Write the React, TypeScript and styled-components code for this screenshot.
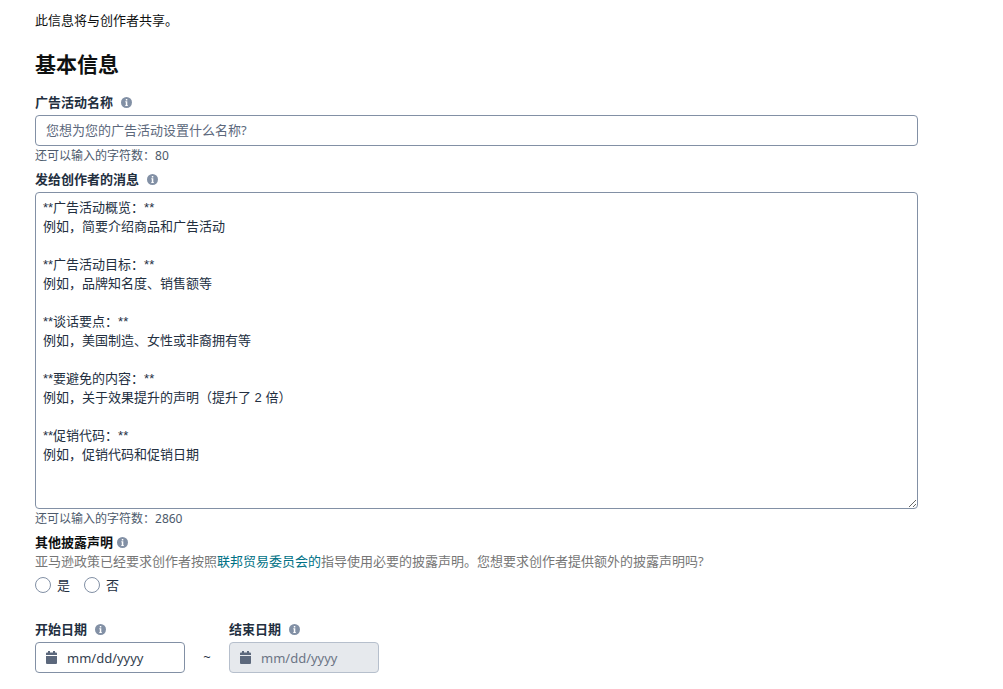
import React, { useId, useState } from 'react';
import styled, { createGlobalStyle } from 'styled-components';

const GlobalStyle = createGlobalStyle`
  *, *::before, *::after { box-sizing: border-box; }
  body {
    margin: 0;
    background: #fff;
    color: #232f3f;
    font: 13px/20px "Noto Sans", "Noto Sans CJK SC", sans-serif;
  }
  input, textarea, button { font: inherit; color: inherit; }
`;

const Page = styled.main`
  padding: 10px 85px 16px 35px;
`;

const Intro = styled.p`
  margin: 0;
  color: #0f1111;
`;

const Heading = styled.h2`
  margin: 19px 0 13px;
  color: #0f1111;
  font-size: 21px;
  line-height: 30px;
  font-weight: 700;
`;

const Field = styled.div`
  margin-bottom: 4px;
`;

const LabelRow = styled.div`
  display: flex;
  align-items: center;
  gap: 8px;
  margin-bottom: 3px;
`;

const Label = styled.label`
  font-weight: 700;
`;

const InfoButton = styled.button`
  display: flex;
  padding: 0;
  border: 0;
  background: none;
  color: #8290a5;
  cursor: pointer;
`;

const controlFrame = `
  border: 1px solid #8290a5;
  border-radius: 4px;
  background: #fff;
`;

const TextInput = styled.input`
  ${controlFrame}
  display: block;
  width: 100%;
  height: 31px;
  padding: 0 10px 2px;
  &::placeholder { color: #5c687c; opacity: 1; }
`;

const MessageBox = styled.textarea`
  ${controlFrame}
  display: block;
  width: 100%;
  padding: 5px 7px;
  height: 317px;
  font-family: "Liberation Sans", "Noto Sans CJK SC", sans-serif;
  line-height: 19px;
  resize: vertical;
`;

const Counter = styled.p`
  margin: 1px 0 0;
  color: #4d5a6c;
  font-size: 12px;
  line-height: 18px;
`;

const Disclosure = styled.fieldset`
  min-width: 0;
  margin: 0 0 24px;
  padding: 0;
  border: 0;
`;

const Legend = styled.legend`
  display: flex;
  align-items: center;
  gap: 4px;
  padding: 0;
  color: #0f1111;
  font-weight: 700;
`;

const Description = styled.p`
  margin: 0 0 5px;
  color: #767676;
  line-height: 18px;
`;

const Link = styled.a`
  color: #007185;
  text-decoration: none;
  &:hover { text-decoration: underline; }
`;

const Choices = styled.div`
  display: flex;
  gap: 14px;
`;

const Choice = styled.label`
  display: flex;
  align-items: center;
  gap: 6px;
  line-height: 18px;
`;

const Radio = styled.input`
  appearance: none;
  width: 16px;
  height: 16px;
  margin: 2px 0;
  border: 1px solid #8290a5;
  border-radius: 50%;
  background: #fff;
  &:checked { border: 5px solid #007185; }
`;

const DateRow = styled.div`
  display: flex;
  flex-wrap: wrap;
  align-items: flex-end;
`;

const DateFrame = styled.div<{ $disabled?: boolean }>`
  display: flex;
  align-items: center;
  gap: 10px;
  width: 150px;
  height: 31px;
  padding: 0 10px;
  border: 1px solid ${({ $disabled }) => ($disabled ? '#b6bfcc' : '#8290a5')};
  border-radius: 4px;
  background: ${({ $disabled }) => ($disabled ? '#e6e9ed' : '#fff')};
`;

const DateInput = styled.input`
  flex: 1;
  min-width: 0;
  padding: 0;
  border: 0;
  outline: 0;
  background: none;
  &::placeholder { color: #333e4e; opacity: 1; }
  &:disabled::placeholder { color: #6c7585; }
`;

const Tilde = styled.span`
  width: 44px;
  line-height: 31px;
  text-align: center;
`;

function Info({ topic }: { topic: string }) {
  return (
    <InfoButton type="button" aria-label={topic}>
      <svg width="11" height="11" viewBox="0 0 22 22" aria-hidden="true">
        <circle cx="11" cy="11" r="11" fill="currentColor" />
        <path d="M9.6 4h3v3h-3zM8.6 8.6h4v7.6h1V18H8.6v-1.8h1v-5.8h-1z" fill="#fff" />
      </svg>
    </InfoButton>
  );
}

function CalendarIcon() {
  return (
    <svg width="11" height="13" viewBox="0 0 11 13" fill="#5c687c" aria-hidden="true">
      <path d="M0 4V2.5Q0 1.5 1 1.5H2V0H4V1.5H7V0H9V1.5H10Q11 1.5 11 2.5V4Z" />
      <path d="M0 5H11V12Q11 13 10 13H1Q0 13 0 12Z" />
    </svg>
  );
}

function DateField({ label, disabled }: { label: string; disabled?: boolean }) {
  const id = useId();
  return (
    <div>
      <LabelRow>
        <Label htmlFor={id}>{label}</Label>
        <Info topic={label} />
      </LabelRow>
      <DateFrame $disabled={disabled}>
        <CalendarIcon />
        <DateInput id={id} type="text" placeholder="mm/dd/yyyy" disabled={disabled} />
      </DateFrame>
    </div>
  );
}

const template = `**广告活动概览：**
例如，简要介绍商品和广告活动

**广告活动目标：**
例如，品牌知名度、销售额等

**谈话要点：**
例如，美国制造、女性或非裔拥有等

**要避免的内容：**
例如，关于效果提升的声明（提升了 2 倍）

**促销代码：**
例如，促销代码和促销日期
`;

export default function App() {
  const [name, setName] = useState('');
  const [message, setMessage] = useState(template);

  return (
    <>
      <GlobalStyle />
      <Page lang="zh-CN">
        <Intro>此信息将与创作者共享。</Intro>
        <Heading>基本信息</Heading>

        <Field>
          <LabelRow>
            <Label htmlFor="name">广告活动名称</Label>
            <Info topic="广告活动名称" />
          </LabelRow>
          <TextInput
            id="name"
            type="text"
            value={name}
            onChange={(e) => setName(e.target.value)}
            placeholder="您想为您的广告活动设置什么名称?"
          />
          <Counter>还可以输入的字符数：{80 - name.length}</Counter>
        </Field>

        <Field>
          <LabelRow>
            <Label htmlFor="message">发给创作者的消息</Label>
            <Info topic="发给创作者的消息" />
          </LabelRow>
          <MessageBox id="message" value={message} onChange={(e) => setMessage(e.target.value)} />
          <Counter>还可以输入的字符数：{2860 + template.length - message.length}</Counter>
        </Field>

        <Disclosure>
          <Legend>
            其他披露声明
            <Info topic="其他披露声明" />
          </Legend>
          <Description>
            亚马逊政策已经要求创作者按照<Link href="#ftc">联邦贸易委员会的</Link>指导使用必要的披露声明。您想要求创作者提供额外的披露声明吗?
          </Description>
          <Choices>
            <Choice>
              <Radio type="radio" name="disclosure" value="yes" />是
            </Choice>
            <Choice>
              <Radio type="radio" name="disclosure" value="no" />否
            </Choice>
          </Choices>
        </Disclosure>

        <DateRow>
          <DateField label="开始日期" />
          <Tilde>~</Tilde>
          <DateField label="结束日期" disabled />
        </DateRow>
      </Page>
    </>
  );
}
